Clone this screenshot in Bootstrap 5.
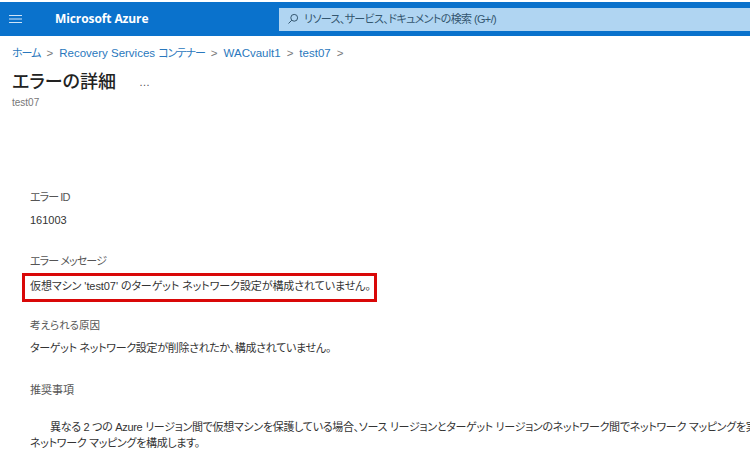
<!DOCTYPE html>
<html lang="ja">
<head>
<meta charset="utf-8">
<title>エラーの詳細</title>
<link href="https://cdn.jsdelivr.net/npm/bootstrap@5.3.0/dist/css/bootstrap.min.css" rel="stylesheet">
<style>
html,body{width:752px;height:471px;overflow:hidden;background:#fff}
body{font-family:"Liberation Sans","Noto Sans CJK JP",sans-serif;color:#333;font-size:11px;line-height:16px;padding:2px 2px 0 0;font-feature-settings:"palt"}
.az-top{background:#0a72cc;height:34px;color:#fff}
.az-burger{width:55px;padding-left:9px;flex:none}
.az-brand{width:224px;flex:none;font-family:"Open Sans","Noto Sans CJK JP",sans-serif;font-weight:700;font-size:12px;letter-spacing:-.1px}
.az-search{background:#b0d5f2;height:23px;color:#33566f;font-size:11px;letter-spacing:-.62px;padding-left:8px;flex:1;gap:5px}
.az-crumbs{color:#2a78bd;font-size:11.5px;padding:9px 0 0 12px;height:29px;gap:6px}
.az-kana{font-size:11px;letter-spacing:-1px}
.az-sep{color:#777}
.az-title{font-size:18px;font-weight:500;color:#222;line-height:24px;padding:5px 0 0 12px;gap:23px;margin:0}
.az-dots{font-size:11px;color:#555;font-weight:400}
.az-sub{font-size:10px;color:#777;padding:2px 0 0 12px;line-height:14px}
.az-body{padding:79px 0 0 30px;white-space:nowrap;overflow:hidden}
.az-label{font-size:10.5px;color:#555;line-height:16px}
.az-label-k{font-size:11px;letter-spacing:-.9px}
.az-label-j{font-size:11px}
.az-val{font-size:11px;color:#333;line-height:16px}
.az-tight{letter-spacing:-.3px}
.az-gap1{margin-top:7px}
.az-gap2{margin-top:25px}
.az-gap3{margin-top:26px}
.az-hl{border:3px solid #d90808;margin:4px 0 0 -8px;width:355px;height:29px;padding:2px 0 0 5px;letter-spacing:-.08px}
.az-after{margin-top:15px}
.az-ind{text-indent:20px;line-height:16px;margin-top:21px;overflow:hidden}
</style>
</head>
<body>
<header class="az-top d-flex align-items-center">
  <div class="az-burger d-flex"><svg width="14" height="10" viewBox="0 0 14 10"><path d="M0 1.5h13M0 5h13M0 8.5h13" stroke="#cfe4f7" stroke-width="1.2" fill="none"/></svg></div>
  <div class="az-brand">Microsoft Azure</div>
  <div class="az-search d-flex align-items-center">
    <svg width="12" height="12" viewBox="0 0 12 12"><circle cx="7.2" cy="4.8" r="3.4" stroke="#33566f" fill="none"/><path d="M4.8 7.2 1.5 10.5" stroke="#33566f" fill="none"/></svg>
    <span>リソース、サービス、ドキュメントの検索 (G+/)</span>
  </div>
</header>
<nav class="az-crumbs d-flex align-items-baseline">
  <span class="az-kana">ホーム</span><span class="az-sep">&gt;</span><span>Recovery Services <span class="az-kana">コンテナー</span></span><span class="az-sep">&gt;</span><span>WACvault1</span><span class="az-sep">&gt;</span><span>test07</span><span class="az-sep">&gt;</span>
</nav>
<h1 class="az-title d-flex align-items-center">エラーの詳細<span class="az-dots">…</span></h1>
<div class="az-sub">test07</div>
<main class="az-body">
  <div class="az-label az-label-k">エラー ID</div>
  <div class="az-val az-gap1">161003</div>
  <div class="az-label az-label-k az-gap2">エラー メッセージ</div>
  <div class="az-hl az-val">仮想マシン 'test07' のターゲット ネットワーク設定が構成されていません。</div>
  <div class="az-label az-after">考えられる原因</div>
  <div class="az-val az-tight az-gap1">ターゲット ネットワーク設定が削除されたか、構成されていません。</div>
  <div class="az-label az-label-j az-gap3">推奨事項</div>
  <div class="az-val az-tight az-ind">異なる 2 つの Azure リージョン間で仮想マシンを保護している場合、ソース リージョンとターゲット リージョンのネットワーク間でネットワーク マッピングを実行し、<br>ネットワーク マッピングを構成します。</div>
</main>
</body>
</html>
